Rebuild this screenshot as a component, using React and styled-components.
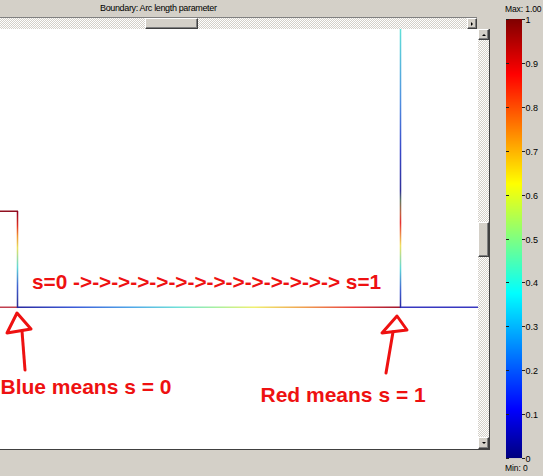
import React from 'react';
import styled, { createGlobalStyle } from 'styled-components';

const GlobalStyle = createGlobalStyle`
  html, body {
    margin: 0;
    padding: 0;
  }
  body {
    width: 543px;
    height: 476px;
    overflow: hidden;
    background: #d4d0c8;
    font-family: "Liberation Sans", Arial, sans-serif;
  }
`;

const Screen = styled.div`
  display: flex;
  width: 543px;
  height: 476px;
  background: #d4d0c8;
`;

const Viewer = styled.div`
  display: flex;
  flex-direction: column;
  width: 490px;
`;

const Title = styled.div`
  height: 17px;
  line-height: 17px;
  padding-left: 100px;
  font-size: 9px;
  letter-spacing: -0.35px;
  color: #000;
  white-space: nowrap;
`;

const HScroll = styled.div`
  display: flex;
  width: 477px;
  height: 12px;
  box-sizing: border-box;
  border-top: 1px solid #808080;
`;

const Track = styled.div`
  flex: 1;
  display: flex;
  flex-direction: ${p => (p.$vertical ? 'column' : 'row')};
  background-color: #fff;
  background-image: repeating-conic-gradient(#d4d0c8 0 25%, #fff 0 50%);
  background-size: 2px 2px;
`;

const bevel = `
  box-sizing: border-box;
  background: #d4d0c8;
  border: 1px solid;
  border-color: #fff #404040 #404040 #fff;
  box-shadow: inset -1px -1px #808080;
`;

const Thumb = styled.div`
  ${bevel}
  flex: none;
  ${p =>
    p.$vertical
      ? `margin-top: ${p.$offset}px; height: ${p.$size}px; width: 100%;`
      : `margin-left: ${p.$offset}px; width: ${p.$size}px; height: 100%;`}
`;

const ScrollButton = styled.div`
  ${bevel}
  flex: none;
  display: flex;
  align-items: center;
  justify-content: center;
  width: ${p => p.$w}px;
  height: ${p => p.$h}px;
`;

const glyphs = {
  right: 'border-width: 2px 0 2px 2px; border-color: transparent transparent transparent #000;',
  up: 'border-width: 0 2px 2px 2px; border-color: transparent transparent #000 transparent;',
  down: 'border-width: 2px 2px 0 2px; border-color: #000 transparent transparent transparent;',
};

const Glyph = styled.span`
  width: 0;
  height: 0;
  border-style: solid;
  ${p => glyphs[p.$dir]}
`;

const CanvasRow = styled.div`
  display: flex;
  height: 421px;
`;

const Canvas = styled.div`
  position: relative;
  width: 478px;
  height: 420px;
  background: #fff;
  border-bottom: 1px solid #404040;
  overflow: hidden;

  svg {
    display: block;
  }
`;

const VScroll = styled.div`
  display: flex;
  flex-direction: column;
  width: 11px;
  height: 420px;
  border-right: 1px solid #404040;
  border-bottom: 1px solid #404040;
`;

const Note = styled.div`
  position: absolute;
  left: ${p => p.$x}px;
  top: ${p => p.$y}px;
  font-family: "Liberation Sans", Arial, sans-serif;
  font-weight: bold;
  font-size: ${p => p.$size}px;
  line-height: 1;
  color: #ee1111;
  white-space: nowrap;
`;

const Legend = styled.div`
  display: flex;
  flex-direction: column;
  width: 53px;
  padding-left: 15px;
  box-sizing: border-box;
`;

const Caption = styled.div`
  height: ${p => p.$h}px;
  line-height: ${p => p.$h}px;
  padding-top: ${p => p.$pad || 0}px;
  font-size: 8.5px;
  letter-spacing: -0.1px;
  color: #000;
  white-space: nowrap;
`;

const ScaleSvg = styled.svg`
  display: block;
  overflow: visible;
`;

const jet = [
  [0, '#000080'],
  [0.11, '#0000ff'],
  [0.375, '#00ffff'],
  [0.5, '#80ff80'],
  [0.625, '#ffff00'],
  [0.875, '#ff0000'],
  [1, '#800000'],
];

// colour ramps sampled along each boundary segment
const baseRamp = [
  [0, '#2a2aa0'],
  [0.15, '#3c5cd8'],
  [0.3, '#50a8e8'],
  [0.42, '#70e0d8'],
  [0.52, '#a8f0a0'],
  [0.62, '#f0f070'],
  [0.75, '#f0a050'],
  [0.88, '#e84040'],
  [1, '#a01830'],
];

const leftRamp = [
  [0, '#900020'],
  [0.15, '#e03020'],
  [0.25, '#f09030'],
  [0.38, '#e8e060'],
  [0.58, '#60d8d8'],
  [0.78, '#4060d0'],
  [1, '#2a2a90'],
];

const rightRamp = [
  [0, '#60e0d8'],
  [0.255, '#5090e0'],
  [0.435, '#3848c8'],
  [0.58, '#303098'],
  [0.615, '#607860'],
  [0.66, '#c06040'],
  [0.695, '#e83030'],
  [0.777, '#f0e060'],
  [0.86, '#60d8d8'],
  [0.94, '#4060d0'],
  [1, '#2828a0'],
];

const hex = c => [1, 3, 5].map(i => parseInt(c.slice(i, i + 2), 16));

function sample(ramp, t) {
  let i = 1;
  while (i < ramp.length - 1 && ramp[i][0] < t) i++;
  const [o0, c0] = ramp[i - 1];
  const [o1, c1] = ramp[i];
  const k = o1 === o0 ? 0 : Math.min(1, Math.max(0, (t - o0) / (o1 - o0)));
  const a = hex(c0);
  const b = hex(c1);
  return `rgb(${a.map((v, j) => Math.round(v + (b[j] - v) * k)).join(',')})`;
}

function Edge({ x, y, length, vertical, ramp, w = 1.5 }) {
  return Array.from({ length }, (_, i) => {
    const fill = sample(ramp, i / (length - 1));
    return vertical ? (
      <rect key={i} x={x} y={y + i} width={w} height="1.05" fill={fill} />
    ) : (
      <rect key={i} x={x + i} y={y} width="1.05" height={w} fill={fill} />
    );
  });
}

const BAR_H = 439;
const ticks = Array.from({ length: 11 }, (_, i) => i / 10);

function ColorScale() {
  return (
    <ScaleSvg width="38" height={BAR_H + 1} viewBox={`0 0 38 ${BAR_H + 1}`}>
      {Array.from({ length: BAR_H }, (_, i) => (
        <rect key={i} x="1" y={i} width="16" height="1.05" fill={sample(jet, 1 - i / (BAR_H - 1))} />
      ))}
      {ticks.map(v => {
        const y = Math.round((1 - v) * BAR_H) + 0.5;
        const label = v === 0 ? '0' : v === 1 ? '1' : v.toFixed(1);
        return (
          <g key={v}>
            <line x1="1" x2="4" y1={y} y2={y} stroke="#202020" />
            <line x1="17" x2="20" y1={y} y2={y} stroke="#202020" />
            <text
              x="20.5"
              y={y + 3.2}
              fontSize="9"
              fontFamily='"Liberation Sans", Arial, sans-serif'
              fill="#000"
            >
              {label}
            </text>
          </g>
        );
      })}
    </ScaleSvg>
  );
}

function Plot() {
  return (
    <svg width="478" height="420" viewBox="0 0 478 420">
      {/* boundaries */}
      <rect x="0" y="181.5" width="18" height="1.5" fill="#901020" />
      <rect x="0" y="277.5" width="17" height="1.5" fill="#c04050" />
      <Edge x={16.75} y={182} length={97} vertical ramp={leftRamp} />
      <Edge x={17} y={277.5} length={383} ramp={baseRamp} />
      <Edge x={399.75} y={0} length={279} vertical ramp={rightRamp} />
      <rect x="401" y="277.5" width="77" height="1.5" fill="#3838c0" />

      {/* hand drawn arrows */}
      <g fill="none" stroke="#ee1111" strokeWidth="3" strokeLinejoin="round" strokeLinecap="round">
        <polygon points="17,284 7,304 31,300" />
        <line x1="22" y1="302" x2="25" y2="341" />
        <polygon points="397,287 382,304 407,301" />
        <line x1="393" y1="303" x2="386" y2="344" />
      </g>
    </svg>
  );
}

export default function App() {
  const arrows = '->'.repeat(14);
  return (
    <>
      <GlobalStyle />
      <Screen>
        <Viewer>
          <Title>Boundary: Arc length parameter</Title>
          <HScroll>
            <Track>
              <Thumb $offset={145} $size={53} />
            </Track>
            <ScrollButton $w={10} $h={11}>
              <Glyph $dir="right" />
            </ScrollButton>
          </HScroll>
          <CanvasRow>
            <Canvas>
              <Plot />
              <Note $x={32} $y={243} $size={20.8}>{`s=0 ${arrows} s=1`}</Note>
              <Note $x={0.5} $y={347} $size={21}>Blue means s = 0</Note>
              <Note $x={260.5} $y={355} $size={21}>Red means s = 1</Note>
            </Canvas>
            <VScroll>
              <ScrollButton $w={11} $h={11}>
                <Glyph $dir="up" />
              </ScrollButton>
              <Track $vertical>
                <Thumb $vertical $offset={182} $size={35} />
              </Track>
              <ScrollButton $w={11} $h={12}>
                <Glyph $dir="down" />
              </ScrollButton>
            </VScroll>
          </CanvasRow>
        </Viewer>
        <Legend>
          <Caption $h={19}>Max: 1.00</Caption>
          <ColorScale />
          <Caption $h={15} $pad={2}>Min: 0</Caption>
        </Legend>
      </Screen>
    </>
  );
}
